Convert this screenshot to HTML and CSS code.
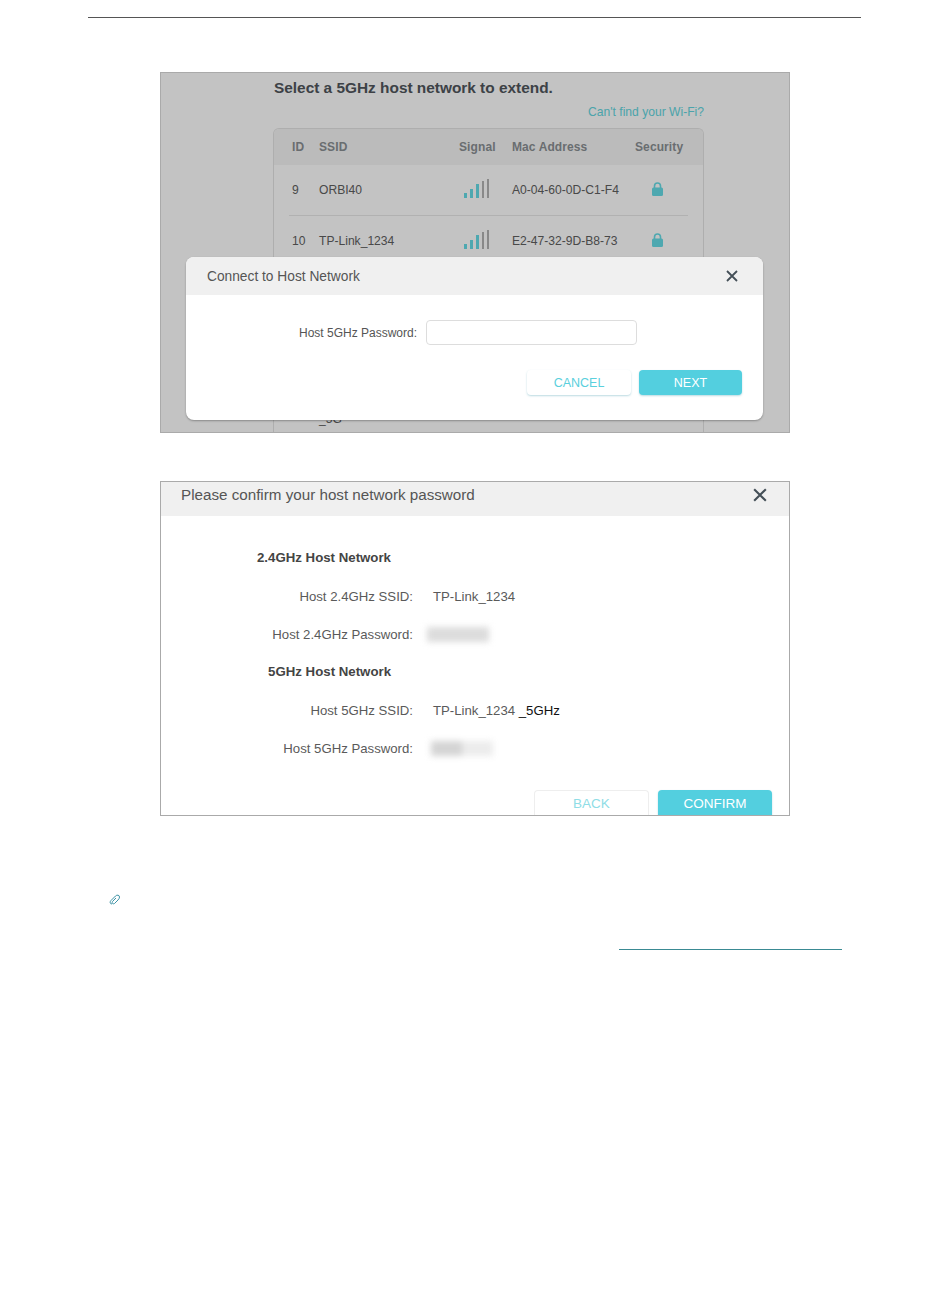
FILE: index.html
```html
<!DOCTYPE html>
<html lang="en">
<head>
    <meta charset="UTF-8">
    <meta name="viewport" content="width=device-width, initial-scale=1.0">
    <title>Select host network</title>
    <link rel="stylesheet" href="styles.css">
</head>
<body>

    <svg class="defs" width="0" height="0">
        <symbol id="signal" viewBox="0 0 25 19">
            <rect x="0" y="14" width="3" height="5" fill="#66dce6"/>
            <rect x="6" y="10" width="3" height="9" fill="#66dce6"/>
            <rect x="12" y="5" width="3" height="14" fill="#66dce6"/>
            <rect x="18" y="2" width="2" height="17" fill="#b4b4b4"/>
            <rect x="23" y="0" width="2" height="19" fill="#b4b4b4"/>
        </symbol>
        <symbol id="lock" viewBox="0 0 11 14">
            <path d="M2.5 6V4a3 3 0 0 1 6 0v2" fill="none" stroke="#66dce6" stroke-width="1.6"/>
            <rect x="0" y="5.5" width="11" height="8.5" rx="1.5" fill="#66dce6"/>
        </symbol>
    </svg>

    <div class="page-rule"></div>

    <div class="shot shot-select">
        <div class="network-panel">
            <h2>Select a 5GHz host network to extend.</h2>
            <a class="find-link">Can't find your Wi-Fi?</a>
            <div class="network-table">
                <div class="table-row table-head">
                    <span>ID</span><span>SSID</span><span>Signal</span><span>Mac Address</span><span>Security</span>
                </div>
                <div class="table-row">
                    <span>9</span><span>ORBI40</span>
                    <svg class="icon-signal"><use href="#signal"/></svg>
                    <span>A0-04-60-0D-C1-F4</span>
                    <svg class="icon-lock"><use href="#lock"/></svg>
                </div>
                <div class="table-row">
                    <span>10</span><span>TP-Link_1234</span>
                    <svg class="icon-signal"><use href="#signal"/></svg>
                    <span>E2-47-32-9D-B8-73</span>
                    <svg class="icon-lock"><use href="#lock"/></svg>
                </div>
                <div class="table-row table-tail">
                    <span></span><span>_5G</span>
                </div>
            </div>
        </div>
        <div class="mask"></div>
        <div class="modal">
            <div class="modal-head">
                <span>Connect to Host Network</span>
                <svg class="icon-close" viewBox="0 0 12 12"><path d="M1 1l10 10M11 1L1 11"/></svg>
            </div>
            <div class="modal-field">
                <label for="host-pass">Host 5GHz Password:</label>
                <input type="text" id="host-pass">
            </div>
            <div class="modal-actions">
                <button class="btn btn-light">CANCEL</button>
                <button class="btn btn-primary">NEXT</button>
            </div>
        </div>
    </div>

    <div class="shot shot-confirm">
        <div class="confirm-head">
            <span>Please confirm your host network password</span>
            <svg class="icon-close" viewBox="0 0 12 12"><path d="M1 1l10 10M11 1L1 11"/></svg>
        </div>
        <div class="confirm-body">
            <div class="confirm-row confirm-title">2.4GHz Host Network</div>
            <div class="confirm-row"><span class="key">Host 2.4GHz SSID:</span><span>TP-Link_1234</span></div>
            <div class="confirm-row"><span class="key">Host 2.4GHz Password:</span><span class="blurred"></span></div>
            <div class="confirm-row confirm-title">5GHz Host Network</div>
            <div class="confirm-row"><span class="key">Host 5GHz SSID:</span><span>TP-Link_1234 <span class="black">_5GHz</span></span></div>
            <div class="confirm-row"><span class="key">Host 5GHz Password:</span><span class="blurred blurred-alt"></span></div>
        </div>
        <div class="confirm-actions">
            <button class="btn btn-light">BACK</button>
            <button class="btn btn-primary">CONFIRM</button>
        </div>
    </div>

    <div class="note">
        <svg class="icon-clip" viewBox="0 0 11 11"><path d="M3 10C1 10 .5 8 2 6.5L6.5 2C8 .5 10.5 1 10.5 3c0 1-.5 2-1.5 3L5.5 9.5C4 10.5 2.5 9 3.5 7.5L7 4"/></svg>
        <div class="note-link"></div>
    </div>

</body>
</html>
```

FILE: styles.css
```css
body {
    font-family: "Liberation Sans", Arial, sans-serif;
    background-color: #ffffff;
    margin: 0;
    padding: 17px 89px 0 88px;
    color: #555555;
}
.defs {
    position: absolute;
}
.page-rule {
    height: 1px;
    background-color: #555555;
}
.shot {
    width: 630px;
    box-sizing: border-box;
    margin-left: 72px;
    border: 1px solid #aaaaaa;
    overflow: hidden;
    background-color: #ffffff;
}

/* first screenshot */
.shot-select {
    position: relative;
    height: 361px;
    margin-top: 54px;
}
.network-panel {
    width: 431px;
    margin-left: 112px;
}
.network-panel h2 {
    margin: 0;
    padding: 6px 0 0 1px;
    font-size: 15.4px;
    line-height: 18px;
    color: #50565c;
}
.find-link {
    display: block;
    margin-top: 8px;
    text-align: right;
    font-size: 12.1px;
    line-height: 14px;
    color: #62d6e0;
}
.network-table {
    margin-top: 9px;
    border: 1px solid #e4e4e4;
    border-bottom: 0;
    border-radius: 6px 6px 0 0;
    height: 320px;
}
.table-row {
    display: grid;
    grid-template-columns: 27px 140px 53px 123px 1fr;
    align-items: center;
    height: 50px;
    margin: 0 15px;
    padding-left: 3px;
    box-sizing: border-box;
    font-size: 12.1px;
    color: #606060;
}
.table-row + .table-row {
    border-top: 1px solid #e8e8e8;
}
.table-head {
    height: 36px;
    margin: 0;
    padding-left: 18px;
    border-radius: 5px 5px 0 0;
    background-color: #f5f5f5;
    color: #8a8f93;
    font-size: 12px;
    font-weight: bold;
    letter-spacing: 0.1px;
}
.table-head + .table-row {
    border-top: 0;
}
.table-row.table-tail {
    height: 30px;
    margin-top: 139px;
    border-top: 0;
}
.icon-signal {
    width: 25px;
    height: 19px;
    margin: -3px 0 0 5px;
}
.icon-lock {
    width: 11px;
    height: 14px;
    margin: -2px 0 0 17px;
}
.mask {
    position: absolute;
    inset: 0;
    background-color: rgba(0, 0, 0, 0.235);
}
.modal {
    position: absolute;
    left: 25px;
    top: 184px;
    width: 577px;
    height: 163px;
    border-radius: 8px;
    overflow: hidden;
    background-color: #ffffff;
    box-shadow: 0 1px 2px rgba(0, 0, 0, 0.3);
}
.modal-head {
    display: flex;
    justify-content: space-between;
    align-items: center;
    height: 38px;
    padding: 0 25px 0 21px;
    background-color: #f0f0f0;
    font-size: 13.75px;
}
.icon-close {
    width: 12px;
    height: 12px;
    fill: none;
    stroke: #444f57;
    stroke-width: 1.8;
}
.modal-field {
    display: flex;
    align-items: center;
    gap: 9px;
    margin-top: 25px;
    padding-left: 113px;
    font-size: 12px;
}
.modal-field input {
    width: 211px;
    height: 25px;
    box-sizing: border-box;
    border: 1px solid #dddddd;
    border-radius: 4px;
}
.modal-actions {
    display: flex;
    justify-content: flex-end;
    gap: 8px;
    margin-top: 25px;
    padding-right: 21px;
}
.btn {
    font-family: inherit;
    font-size: 12.5px;
    height: 25px;
    width: 104px;
    padding: 0;
    border-radius: 4px;
    border: 0;
    box-shadow: 0 1px 2px rgba(60, 150, 170, 0.35);
}
.btn-light {
    background-color: #ffffff;
    color: #5ad0dd;
}
.btn-primary {
    width: 103px;
    background-color: #53cfdf;
    color: #ffffff;
}

/* second screenshot */
.shot-confirm {
    height: 335px;
    margin-top: 48px;
}
.confirm-head {
    display: flex;
    justify-content: space-between;
    align-items: center;
    height: 34px;
    padding: 0 22px 9px 20px;
    box-sizing: border-box;
    background-color: #f0f0f0;
    font-size: 15.2px;
}
.confirm-head .icon-close {
    width: 14px;
    height: 14px;
}
.confirm-body {
    padding-top: 23px;
}
.confirm-row {
    display: grid;
    grid-template-columns: 252px 1fr;
    column-gap: 20px;
    align-items: center;
    height: 38px;
    font-size: 13.2px;
    color: #5a5a5a;
}
.key {
    text-align: right;
}
.confirm-title {
    display: block;
    width: 230px;
    text-align: right;
    font-size: 13.25px;
    font-weight: bold;
    line-height: 38px;
    color: #444444;
}
.black {
    color: #111111;
}
.blurred {
    display: block;
    width: 62px;
    height: 15px;
    margin-left: -6px;
    background-color: #dcdcdc;
    filter: blur(3px);
}
.blurred-alt {
    margin-left: -2px;
    background: linear-gradient(to right, #d4d4d4 50%, #ececec 50%);
}
.confirm-actions {
    display: flex;
    justify-content: flex-end;
    gap: 9px;
    margin-top: 23px;
    padding-right: 17px;
}
.confirm-actions .btn {
    font-size: 13.5px;
    height: 26px;
    border-radius: 4px 4px 0 0;
}
.confirm-actions .btn-light {
    width: 115px;
    border: 1px solid #eeeeee;
    border-bottom: 0;
    color: #8fdde6;
    box-shadow: none;
}
.confirm-actions .btn-primary {
    width: 114px;
}

/* note under the screenshots */
.note {
    position: relative;
    height: 60px;
    margin-top: 78px;
}
.icon-clip {
    display: block;
    width: 11px;
    height: 11px;
    margin-left: 21px;
    fill: none;
    stroke: #3d93a6;
    stroke-width: 1;
}
.note-link {
    height: 1px;
    margin: 44px 19px 0 531px;
    background-color: #3a8a93;
}
```
